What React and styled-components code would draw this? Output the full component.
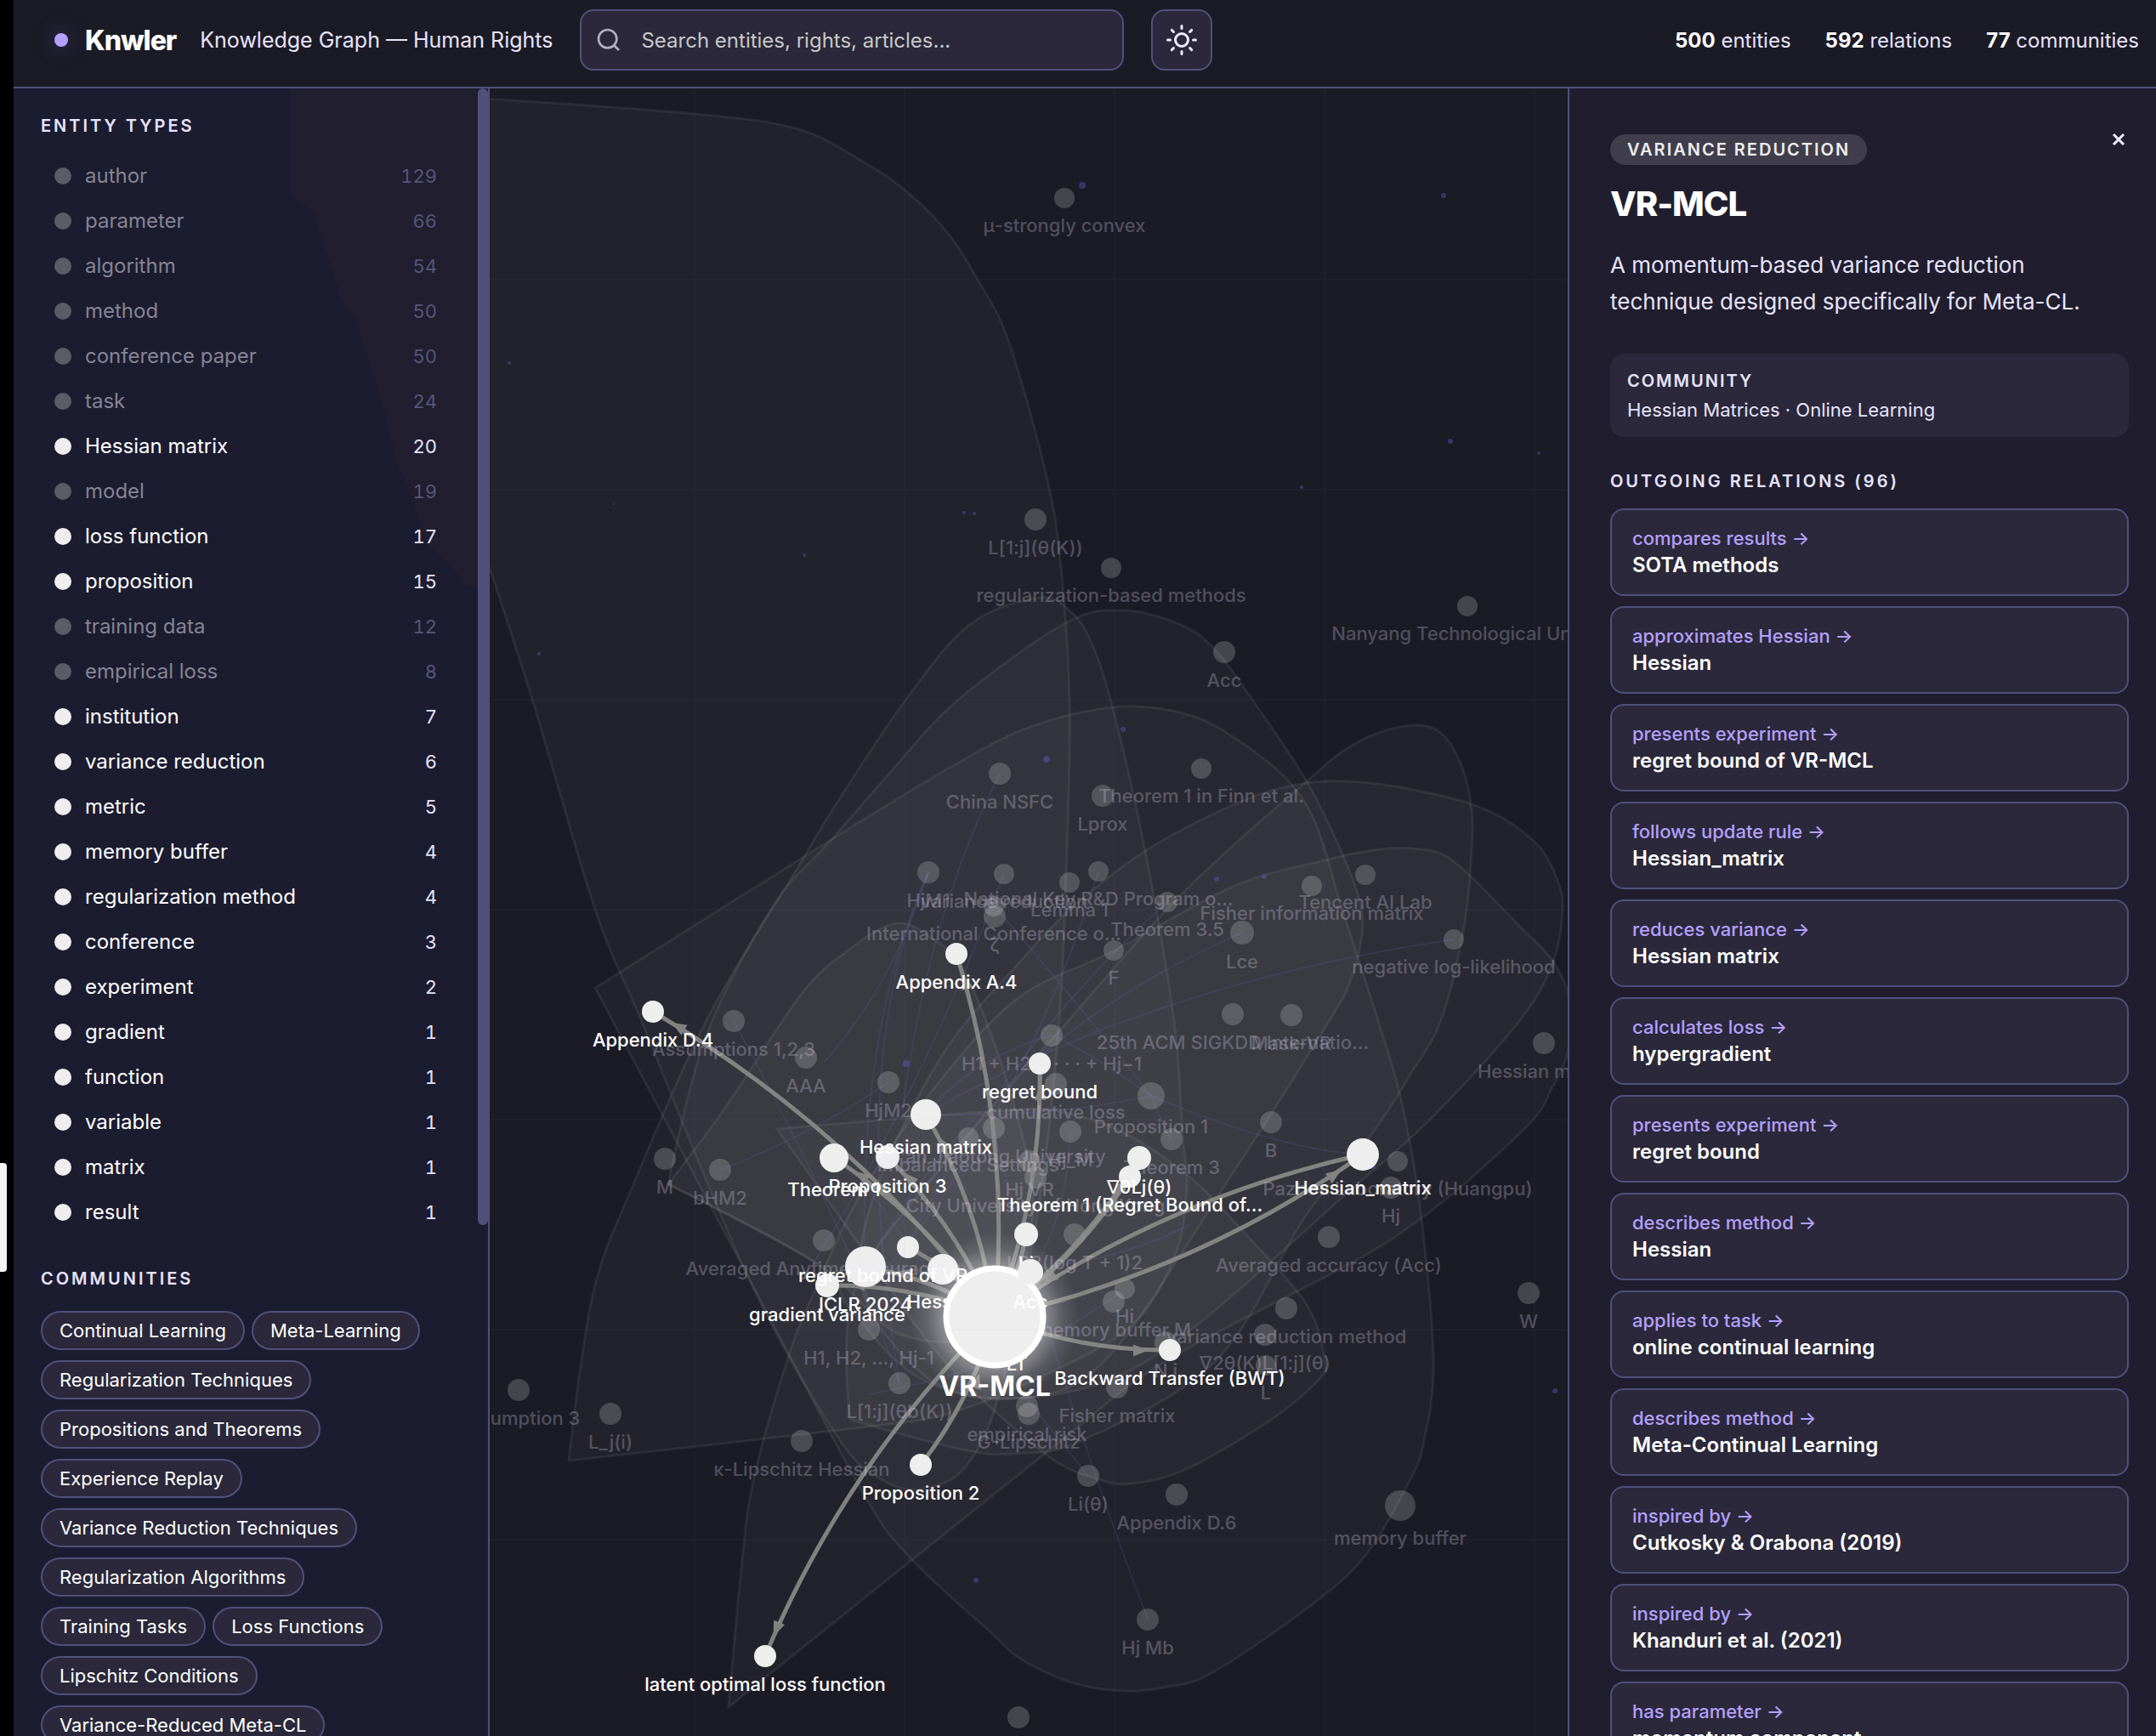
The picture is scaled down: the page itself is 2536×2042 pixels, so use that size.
import React from 'react';
import styled, { createGlobalStyle } from 'styled-components';

const GlobalStyle = createGlobalStyle`
  * {
    box-sizing: border-box;
  }
  body {
    margin: 0;
    background: #000;
    color: #fff;
    font-family: Inter, "Liberation Sans", sans-serif;
  }
  button, input {
    font-family: inherit;
    color: inherit;
  }
`;

const Shell = styled.div`
  display: flex;
  height: 100vh;
  overflow: hidden;
`;

const Edge = styled.div`
  position: relative;
  flex: 0 0 16px;
  background: #000;
  &::after {
    content: '';
    position: absolute;
    top: 67%;
    left: 0;
    width: 8px;
    height: 128px;
    border-radius: 0 4px 4px 0;
    background: #f4f4f4;
  }
`;

const Page = styled.div`
  flex: 1;
  min-width: 0;
  display: flex;
  flex-direction: column;
  background: #1b1b26;
`;

const Header = styled.header`
  flex: 0 0 104px;
  display: flex;
  align-items: center;
  padding: 0 20px 8px 48px;
  border-bottom: 2px solid #50507a;
  background: #1b1b26;
  white-space: nowrap;
`;

const BrandDot = styled.span`
  width: 16px;
  height: 16px;
  margin-right: 20px;
  border-radius: 50%;
  background: #b4a0ff;
  box-shadow: 0 0 24px rgba(140, 120, 255, 0.35);
`;

const Brand = styled.h1`
  margin: 0 28px 0 0;
  font-size: 32px;
  font-weight: 800;
  letter-spacing: -1px;
`;

const Subtitle = styled.span`
  margin-right: 32px;
  font-size: 25px;
  color: #e8e4ff;
`;

const SearchBox = styled.label`
  flex: 0 1 640px;
  display: flex;
  align-items: center;
  gap: 22px;
  height: 72px;
  margin-right: 32px;
  padding: 0 16px;
  border: 2px solid #50507a;
  border-radius: 16px;
  background: #2a283a;
  svg {
    flex: none;
  }
  input {
    flex: 1;
    min-width: 0;
    padding: 0;
    border: 0;
    outline: 0;
    background: none;
    font-size: 24px;
  }
  input::placeholder {
    color: #c8c8c8;
    opacity: 1;
  }
`;

const ThemeButton = styled.button`
  display: flex;
  align-items: center;
  justify-content: center;
  width: 72px;
  height: 72px;
  padding: 0;
  border: 2px solid #50507a;
  border-radius: 16px;
  background: #2a283a;
`;

const Stats = styled.div`
  display: flex;
  gap: 40px;
  margin-left: auto;
  font-size: 24px;
  color: #e8e4ff;
  strong {
    font-weight: 700;
    color: #fff;
  }
`;

const Body = styled.div`
  flex: 1;
  min-height: 0;
  display: flex;
`;

const Sidebar = styled.aside`
  position: relative;
  flex: 0 0 560px;
  display: flex;
  border-right: 2px solid #50507a;
  background: #1c1c30;
  overflow: hidden;
`;

const SidebarTint = styled.div`
  position: absolute;
  inset: 0;
  background: #201e2f;
  clip-path: polygon(326px 0, 326px 124px, 354px 146px, 370px 200px, 386px 250px, 404px 276px, 420px 326px, 436px 376px, 451px 440px, 468px 480px, 486px 536px, 514px 560px, 530px 584px, 558px 592px, 558px 0);
`;

const SidebarContent = styled.div`
  position: relative;
  flex: 1;
  min-width: 0;
  padding: 32px;
`;

const ScrollThumb = styled.div`
  position: relative;
  flex: 0 0 12px;
  height: 69%;
  border-radius: 6px;
  background: #50507a;
`;

const SectionTitle = styled.h2`
  margin: 0;
  font-size: 20px;
  line-height: 24px;
  font-weight: 600;
  letter-spacing: ${({ $tight }) => ($tight ? '2px' : '3px')};
  text-transform: uppercase;
  color: #e8e4ff;
`;

const TypeList = styled.ul`
  margin: 20px 0 40px;
  padding: 0;
  list-style: none;
`;

const TypeRow = styled.button`
  display: flex;
  align-items: center;
  gap: 16px;
  width: 100%;
  height: 53px;
  padding: 0 16px;
  border: 0;
  background: none;
  font-size: 24px;
  text-align: left;
  color: ${({ $dim }) => ($dim ? '#858594' : '#fff')};
  &::before {
    content: '';
    flex: none;
    width: 20px;
    height: 20px;
    border-radius: 50%;
    background: ${({ $dim }) => ($dim ? '#5c5c68' : '#eee')};
  }
  span:last-child {
    margin-left: auto;
    font-size: 22px;
    font-variant-numeric: tabular-nums;
    color: ${({ $dim }) => ($dim ? '#57557a' : '#e8e4ff')};
  }
`;

const Chips = styled.div`
  display: flex;
  flex-wrap: wrap;
  gap: 12px 8px;
  margin-top: 26px;
`;

const Chip = styled.button`
  height: 46px;
  padding: 0 20px;
  border: 2px solid #50507a;
  border-radius: 23px;
  background: #2a283a;
  font-size: 22px;
  color: #fff;
  white-space: nowrap;
`;

const Canvas = styled.main`
  flex: 1;
  min-width: 0;
  overflow: hidden;
  svg {
    display: block;
    width: 100%;
    height: 100%;
  }
  text {
    font-size: 22px;
    font-weight: 500;
    text-anchor: middle;
    fill: #fff;
  }
  text.dim {
    fill: rgba(232, 232, 250, 0.27);
  }
  text.selected {
    font-size: 32px;
    font-weight: 700;
  }
`;

const Panel = styled.aside`
  position: relative;
  flex: 0 0 692px;
  padding: 54px 32px 0 48px;
  border-left: 2px solid #50507a;
  background: #201e2e;
  overflow: hidden;
`;

const CloseButton = styled.button`
  position: absolute;
  top: 42px;
  right: 26px;
  display: flex;
  align-items: center;
  justify-content: center;
  width: 36px;
  height: 36px;
  padding: 0;
  border: 0;
  background: none;
`;

const Badge = styled.span`
  display: inline-block;
  padding: 0 20px;
  border-radius: 18px;
  background: #403e4c;
  font-size: 20px;
  line-height: 36px;
  font-weight: 600;
  letter-spacing: 2px;
  text-transform: uppercase;
  color: #eee;
`;

const EntityName = styled.h2`
  margin: 22px 0 26px;
  font-size: 40px;
  line-height: 48px;
  font-weight: 800;
  letter-spacing: -1px;
`;

const Description = styled.p`
  margin: 0 0 40px;
  font-size: 26px;
  line-height: 43px;
  color: #e8e4ff;
`;

const Community = styled.section`
  margin-bottom: 40px;
  padding: 20px 20px 18px;
  border-radius: 16px;
  background: #2a283a;
  p {
    margin: 8px 0 0;
    font-size: 22px;
    line-height: 28px;
    color: #e8e4ff;
  }
`;

const Relations = styled.div`
  display: flex;
  flex-direction: column;
  gap: 12px;
  margin-top: 20px;
`;

const RelationCard = styled.button`
  flex: none;
  height: 103px;
  padding: 0 24px;
  border: 2px solid #50507a;
  border-radius: 16px;
  background: #2a283a;
  text-align: left;
  span {
    display: block;
    font-size: 22px;
    line-height: 30px;
    font-weight: 500;
    color: #b4a0ff;
  }
  strong {
    display: block;
    font-size: 24px;
    line-height: 34px;
    font-weight: 600;
    color: #fff;
  }
`;

// [name, count, highlighted]
const TYPES = [
  ['author', 129], ['parameter', 66], ['algorithm', 54], ['method', 50],
  ['conference paper', 50], ['task', 24], ['Hessian matrix', 20, true], ['model', 19],
  ['loss function', 17, true], ['proposition', 15, true], ['training data', 12],
  ['empirical loss', 8], ['institution', 7, true], ['variance reduction', 6, true],
  ['metric', 5, true], ['memory buffer', 4, true], ['regularization method', 4, true],
  ['conference', 3, true], ['experiment', 2, true], ['gradient', 1, true],
  ['function', 1, true], ['variable', 1, true], ['matrix', 1, true], ['result', 1, true],
];

const COMMUNITIES = [
  'Continual Learning', 'Meta-Learning', 'Regularization Techniques',
  'Propositions and Theorems', 'Experience Replay', 'Variance Reduction Techniques',
  'Regularization Algorithms', 'Training Tasks', 'Loss Functions',
  'Lipschitz Conditions', 'Variance-Reduced Meta-CL',
];

const RELATIONS = [
  ['compares results', 'SOTA methods'],
  ['approximates Hessian', 'Hessian'],
  ['presents experiment', 'regret bound of VR-MCL'],
  ['follows update rule', 'Hessian_matrix'],
  ['reduces variance', 'Hessian matrix'],
  ['calculates loss', 'hypergradient'],
  ['presents experiment', 'regret bound'],
  ['describes method', 'Hessian'],
  ['applies to task', 'online continual learning'],
  ['describes method', 'Meta-Continual Learning'],
  ['inspired by', 'Cutkosky & Orabona (2019)'],
  ['inspired by', 'Khanduri et al. (2021)'],
  ['has parameter', 'momentum component'],
];

// [x, y, label, radius]
const DIM_NODES = [
  [1252, 233, 'μ-strongly convex'], [1218, 611, 'L[1:j](θ(K))', 13],
  [1307, 668, 'regularization-based methods'], [1726, 713, 'Nanyang Technological Univ...'],
  [1440, 767, 'Acc', 13], [1176, 910, 'China NSFC', 13], [1413, 904, 'Theorem 1 in Finn et al.'],
  [1297, 936, 'Lprox', 13], [1092, 1026, 'HjM1', 13], [1292, 1025, 'National Key R&D Program o...'],
  [1181, 1028, 'variance reduction'], [1258, 1038, 'Lemma 1'], [1169, 1066, 'International Conference o...'],
  [1170, 1078, 'ζ', 13], [1373, 1061, 'Theorem 3.5'], [1543, 1042, 'Fisher information matrix'],
  [1606, 1029, 'Tencent AI Lab'], [1461, 1097, 'Lce', 14], [1310, 1118, 'F'],
  [1710, 1105, 'negative log-likelihood'], [1450, 1193, '25th ACM SIGKDD Internatio...', 13],
  [1519, 1194, 'Mask-VR', 13], [863, 1201, 'Assumptions 1,2,3', 13], [948, 1244, 'AAA', 13],
  [1045, 1273, 'HjM2', 13], [1237, 1218, 'H1 + H2 + · · · + Hj−1', 13],
  [1242, 1275, 'cumulative loss', 13], [1354, 1289, 'Proposition 1', 16], [1378, 1340, 'Theorem 3', 13],
  [1495, 1320, 'B', 13], [1644, 1366, 'Pazhou Laboratory (Huangpu)'], [1636, 1397, 'Hj', 13],
  [1563, 1455, 'Averaged accuracy (Acc)', 13], [1798, 1521, 'W', 13], [1816, 1227, 'Hessian matrix', 13],
  [782, 1363, 'M', 13], [847, 1376, 'bHM2', 13], [1169, 1327, "Xi'an Jiaotong University", 13],
  [1139, 1338, 'Imbalanced Settings', 12], [1259, 1331, 'Hj_M', 13], [1211, 1366, 'Hj VR', 13],
  [1218, 1385, 'City University of Hong Kong', 13], [969, 1459, 'Averaged Anytime Accuracy ...', 13],
  [1264, 1452, 'LD2(log T + 1)2', 13], [1323, 1516, 'Hi', 12], [1310, 1531, 'memory buffer M', 13],
  [1513, 1539, 'variance reduction method', 13], [1488, 1570, '∇2θ(K)L[1:j](θ)', 13],
  [1489, 1606, 'L', 12], [1371, 1579, 'N i', 13], [1314, 1632, 'Fisher matrix', 13],
  [1208, 1654, 'empirical risk', 13], [1210, 1663, 'G-Lipschitz', 13],
  [1022, 1564, 'H1, H2, ..., Hj-1', 13], [1058, 1627, 'L[1:j](θb(K))', 13],
  [943, 1695, 'κ-Lipschitz Hessian', 13], [610, 1635, 'Assumption 3', 13], [718, 1663, 'L_j(i)', 13],
  [1280, 1736, 'Li(θ)', 13], [1384, 1758, 'Appendix D.6', 13], [1647, 1771, 'memory buffer', 18],
  [1350, 1905, 'Hj Mb', 13], [1198, 2020, '', 13],
];

const NODES = [
  [1125, 1122, 'Appendix A.4', 13], [768, 1190, 'Appendix D.4', 13], [1223, 1251, 'regret bound', 13],
  [1089, 1311, 'Hessian matrix', 18], [981, 1362, 'Theorem 1', 17], [1044, 1361, 'Proposition 3', 14],
  [1340, 1362, '∇θLj(θ)', 14], [1329, 1384, 'Theorem 1 (Regret Bound of...', 13],
  [1603, 1358, 'Hessian_matrix', 19], [1207, 1452, 'Li', 14], [1068, 1467, 'regret bound of VR-MCL', 13],
  [1018, 1490, 'ICLR 2024', 24], [1109, 1493, 'Hessian', 18], [973, 1512, 'gradient variance', 14],
  [1376, 1588, 'Backward Transfer (BWT)', 13], [1083, 1723, 'Proposition 2', 13],
  [900, 1948, 'latent optimal loss function', 13], [1196, 1572, 'LT', 12],
];

const CENTER = [1170, 1549, 'VR-MCL', 57];
const ACC = [1212, 1496, 'Acc', 15];
const INCOMING = ['Hessian_matrix', 'Proposition 2'];
const NOT_OUTGOING = ['Proposition 2', 'LT'];

// community outlines; a repeated point makes a sharp corner
const HULLS = [
  [[540, 114], [540, 114], [817, 134], [939, 152], [1015, 190], [1065, 224], [1114, 273], [1150, 329], [1186, 400], [1231, 560], [1248, 666], [1258, 821], [1256, 968], [1246, 1200], [1220, 1430], [1176, 1638], [1136, 1725], [1087, 1751], [1040, 1742], [985, 1690], [879, 1500], [754, 1200], [700, 1070], [623, 813], [540, 560], [540, 560]],
  [[1222, 703], [1259, 719], [1284, 756], [1309, 833], [1347, 1001], [1381, 1200], [1391, 1333], [1396, 1400], [1381, 1480], [1330, 1560], [1230, 1617], [1118, 1662], [1006, 1680], [669, 1718], [669, 1718], [684, 1600], [703, 1500], [742, 1400], [831, 1200], [938, 1021], [982, 948], [1064, 825], [1140, 735]],
  [[1322, 718], [1389, 735], [1427, 762], [1469, 817], [1537, 919], [1581, 1009], [1600, 1062], [1602, 1099], [1589, 1152], [1564, 1200], [1450, 1380], [1300, 1600], [1190, 1645], [1080, 1620], [1000, 1540], [962, 1487], [786, 1393], [786, 1393], [830, 1220], [909, 1066], [977, 989], [1045, 911], [1125, 825], [1253, 733]],
  [[700, 1162], [700, 1162], [974, 990], [1117, 903], [1214, 854], [1320, 831], [1402, 842], [1461, 874], [1516, 919], [1549, 972], [1579, 1070], [1621, 1200], [1648, 1293], [1670, 1417], [1686, 1600], [1674, 1700], [1654, 1750], [1608, 1827], [1549, 1883], [1427, 1967], [1368, 1985], [1322, 1989], [1263, 1980], [1200, 1951], [1163, 1918], [1073, 1835], [1015, 1756], [879, 1500]],
  [[857, 2008], [857, 2008], [872, 1846], [886, 1742], [926, 1600], [957, 1521], [1015, 1400], [1109, 1267], [1200, 1172], [1309, 1119], [1452, 1042], [1562, 1011], [1621, 999], [1663, 998], [1697, 1005], [1730, 1031], [1789, 1091], [1827, 1131], [1847, 1180], [1844, 1237], [1827, 1277], [1788, 1333], [1633, 1460], [1373, 1600], [1229, 1710]],
  [[1667, 853], [1697, 864], [1720, 903], [1731, 952], [1731, 1001], [1722, 1091], [1695, 1200], [1657, 1267], [1614, 1333], [1536, 1430], [1431, 1600], [1276, 1693], [1194, 1710], [1127, 1704], [1000, 1670], [1000, 1670], [1005, 1517], [1109, 1370], [1257, 1200], [1368, 1074], [1452, 993], [1537, 919], [1579, 884], [1621, 862]],
  [[1583, 919], [1663, 929], [1747, 952], [1806, 991], [1831, 1033], [1838, 1070], [1827, 1131], [1788, 1200], [1682, 1317], [1585, 1403], [1410, 1557], [1300, 1625], [1180, 1645], [1090, 1620], [1015, 1520], [1030, 1400], [1109, 1240], [1200, 1131], [1263, 1066], [1347, 1001], [1452, 946], [1520, 924]],
  [[914, 1328], [914, 1328], [1170, 1307], [1245, 1307], [1323, 1333], [1400, 1385], [1459, 1445], [1536, 1533], [1558, 1600], [1551, 1623], [1495, 1670], [1398, 1727], [1333, 1745], [1293, 1740], [1229, 1710], [1110, 1600], [1015, 1470]],
  [[1054, 1086], [1101, 1107], [1137, 1147], [1190, 1290], [1215, 1430], [1170, 1560], [1060, 1570], [962, 1487], [786, 1393], [786, 1393], [855, 1300], [942, 1170], [996, 1119]],
];

// [x1, y1, x2, y2, bend]
const FAINT_EDGES = [
  [1176, 910, 1060, 1320, -30], [1092, 1026, 1022, 1564, -60], [1092, 1026, 969, 1250, 20],
  [1092, 1026, 1058, 1627, -80], [1292, 1025, 1045, 1490, 40], [1373, 1061, 1022, 1564, -50],
  [1170, 1066, 1354, 1289, 20], [1710, 1105, 1089, 1311, -50], [863, 1201, 1058, 1627, 40],
  [1045, 1273, 847, 1376, 10], [1237, 1218, 1354, 1289, -20], [1354, 1289, 1603, 1358, 30],
  [1354, 1289, 1378, 1340, -5], [1089, 1311, 1354, 1289, 15], [1237, 1218, 1089, 1311, -20],
  [1461, 1097, 1018, 1490, -70], [1259, 1331, 1211, 1500, 20], [1018, 1490, 1400, 1440, 50],
  [1280, 1736, 1022, 1400, -30], [1350, 1905, 1169, 1327, -30], [1323, 1516, 1022, 1640, 30],
  [1181, 1028, 948, 1500, 20],
];

const PARTICLES = [
  [1273, 218, 4], [1698, 230, 3], [599, 427, 2], [1531, 573, 2], [1706, 519, 3], [722, 593, 1],
  [946, 653, 2], [1134, 603, 2], [1146, 604, 2], [634, 769, 2], [1231, 893, 4], [1321, 858, 3],
  [1431, 1034, 3], [1487, 1031, 3], [1810, 533, 2], [1066, 1251, 4], [1615, 1372, 3],
  [1829, 1636, 3], [1148, 1859, 3],
];

const same = (p, q) => p[0] === q[0] && p[1] === q[1];

const tangent = (prev, point, next) => (
  same(prev, point) || same(point, next)
    ? [0, 0]
    : [(next[0] - prev[0]) / 6, (next[1] - prev[1]) / 6]
);

const hullPath = points => {
  const n = points.length;
  const at = i => points[(i + n) % n];
  let d = `M${points[0]}`;
  for (let i = 0; i < n; i++) {
    const b = at(i);
    const c = at(i + 1);
    if (same(b, c)) continue;
    const t1 = tangent(at(i - 1), b, c);
    const t2 = tangent(b, c, at(i + 2));
    d += `C${b[0] + t1[0]},${b[1] + t1[1]} ${c[0] - t2[0]},${c[1] - t2[1]} ${c}`;
  }
  return d + 'Z';
};

const Link = ({ from, to }) => {
  const [x1, y1] = from;
  const [x2, y2] = to;
  const cx = (x1 + x2) / 2 - (y2 - y1) * 0.1;
  const cy = (y1 + y2) / 2 + (x2 - x1) * 0.1;
  const angle = Math.atan2(y2 - cy, x2 - cx);
  const reach = to[3] + 12;
  const tipX = x2 - Math.cos(angle) * reach;
  const tipY = y2 - Math.sin(angle) * reach;
  return (
    <g opacity="0.9">
      <path d={`M${x1},${y1}Q${cx},${cy} ${x2},${y2}`} fill="none" stroke="#8c8c8a" strokeWidth="5" />
      <path
        d="M0 0L-18 -7V7Z"
        fill="#8c8c8a"
        transform={`translate(${tipX} ${tipY}) rotate(${(angle * 180) / Math.PI})`}
      />
    </g>
  );
};

const NodeLabel = ({ node: [x, y, label, r = 12], className }) => (
  <text className={className} x={x} y={y + r + 28}>{label}</text>
);

const Graph = () => (
  <svg role="img" aria-label="Knowledge graph">
    <defs>
      <radialGradient id="glow">
        <stop offset="0.55" stopColor="#fff" stopOpacity="0.42" />
        <stop offset="0.8" stopColor="#fff" stopOpacity="0.12" />
        <stop offset="1" stopColor="#fff" stopOpacity="0" />
      </radialGradient>
      <pattern id="grid" x="240" y="224" width="247" height="247" patternUnits="userSpaceOnUse">
        <path d="M0 1H247M1 0V247" stroke="#8080c0" strokeOpacity="0.04" strokeWidth="2" />
      </pattern>
    </defs>
    <g transform="translate(-576 -104)">
      {HULLS.map((points, i) => (
        <path key={i} d={hullPath(points)} fill="#eee" fillOpacity="0.034" stroke="#eee" strokeOpacity="0.07" strokeWidth="3" />
      ))}
      {FAINT_EDGES.map(([x1, y1, x2, y2, bend], i) => (
        <path key={i} d={`M${x1},${y1}Q${(x1 + x2) / 2 + bend},${(y1 + y2) / 2 + bend} ${x2},${y2}`} fill="none" stroke="#7a72c8" strokeOpacity="0.14" strokeWidth="2" />
      ))}
      {PARTICLES.map(([x, y, r]) => <circle key={`${x}-${y}`} cx={x} cy={y} r={r} fill="#6a5acd" opacity="0.4" />)}
      {DIM_NODES.map(([x, y, , r = 12]) => <circle key={`${x}-${y}`} cx={x} cy={y} r={r} fill="#eee" opacity="0.2" />)}
      {NODES.filter(n => !NOT_OUTGOING.includes(n[2])).map(n => <Link key={n[2]} from={CENTER} to={n} />)}
      {NODES.filter(n => INCOMING.includes(n[2])).map(n => <Link key={n[2]} from={n} to={CENTER} />)}
      {NODES.map(n => <circle key={n[2]} cx={n[0]} cy={n[1]} r={n[3]} fill="#eee" />)}
      {DIM_NODES.map(n => <NodeLabel key={`${n[0]}-${n[1]}`} node={n} className="dim" />)}
      {NODES.map(n => <NodeLabel key={n[2]} node={n} />)}
      <circle cx={CENTER[0]} cy={CENTER[1]} r="100" fill="url(#glow)" />
      <circle cx={CENTER[0]} cy={CENTER[1]} r={CENTER[3]} fill="#eee" stroke="#fff" strokeWidth="7" />
      <circle cx={ACC[0]} cy={ACC[1]} r={ACC[3]} fill="#eee" />
      <NodeLabel node={ACC} />
      <text className="selected" x={CENTER[0]} y="1642">{CENTER[2]}</text>
    </g>
    <rect width="100%" height="100%" fill="url(#grid)" />
  </svg>
);

const SearchIcon = () => (
  <svg width="32" height="32" viewBox="0 0 24 24" fill="none" stroke="#b0aec8" strokeWidth="2">
    <circle cx="11" cy="11" r="8" />
    <path d="M21 21l-4.35-4.35" />
  </svg>
);

const SunIcon = () => (
  <svg width="36" height="36" viewBox="0 0 24 24" fill="none" stroke="#f0ecff" strokeWidth="2" strokeLinecap="round">
    <circle cx="12" cy="12" r="5" />
    <path d="M12 1v2M12 21v2M4.22 4.22l1.42 1.42M18.36 18.36l1.42 1.42M1 12h2M21 12h2M4.22 19.78l1.42-1.42M18.36 5.64l1.42-1.42" />
  </svg>
);

const App = () => (
  <Shell>
    <GlobalStyle />
    <Edge />
    <Page>
      <Header>
        <BrandDot />
        <Brand>Knwler</Brand>
        <Subtitle>Knowledge Graph — Human Rights</Subtitle>
        <SearchBox>
          <SearchIcon />
          <input type="text" aria-label="Search" placeholder="Search entities, rights, articles..." />
        </SearchBox>
        <ThemeButton aria-label="Toggle theme"><SunIcon /></ThemeButton>
        <Stats>
          <span><strong>500</strong> entities</span>
          <span><strong>592</strong> relations</span>
          <span><strong>77</strong> communities</span>
        </Stats>
      </Header>
      <Body>
        <Sidebar>
          <SidebarTint />
          <SidebarContent>
            <SectionTitle>Entity types</SectionTitle>
            <TypeList>
              {TYPES.map(([name, count, on]) => (
                <li key={name}>
                  <TypeRow $dim={!on}>
                    <span>{name}</span>
                    <span>{count}</span>
                  </TypeRow>
                </li>
              ))}
            </TypeList>
            <SectionTitle>Communities</SectionTitle>
            <Chips>
              {COMMUNITIES.map(name => <Chip key={name}>{name}</Chip>)}
            </Chips>
          </SidebarContent>
          <ScrollThumb />
        </Sidebar>
        <Canvas>
          <Graph />
        </Canvas>
        <Panel>
          <CloseButton aria-label="Close">
            <svg width="16" height="16" viewBox="0 0 16 16" stroke="#f0ecff" strokeWidth="3">
              <path d="M2 2l12 12M14 2L2 14" />
            </svg>
          </CloseButton>
          <Badge>Variance reduction</Badge>
          <EntityName>VR-MCL</EntityName>
          <Description>A momentum-based variance reduction technique designed specifically for Meta-CL.</Description>
          <Community>
            <SectionTitle $tight>Community</SectionTitle>
            <p>Hessian Matrices · Online Learning</p>
          </Community>
          <SectionTitle>Outgoing relations (96)</SectionTitle>
          <Relations>
            {RELATIONS.map(([verb, target], i) => (
              <RelationCard key={i}>
                <span>{verb} →</span>
                <strong>{target}</strong>
              </RelationCard>
            ))}
          </Relations>
        </Panel>
      </Body>
    </Page>
  </Shell>
);

export default App;
